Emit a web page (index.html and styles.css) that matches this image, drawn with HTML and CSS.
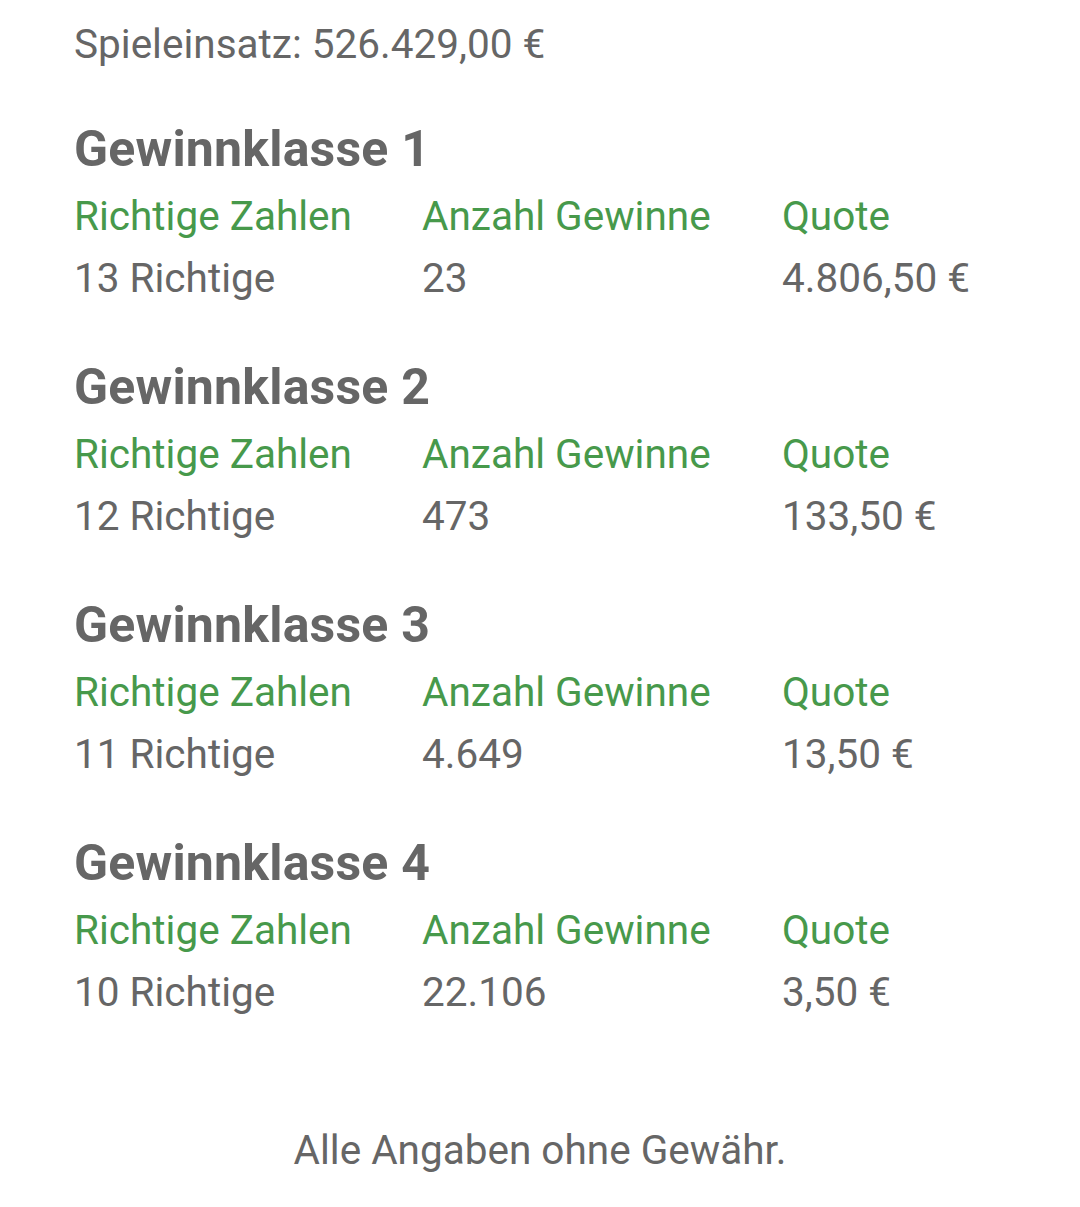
FILE: index.html
```html
<!DOCTYPE html>
<html lang="de">
<head>
<meta charset="utf-8">
<title>Quoten</title>
<link rel="stylesheet" href="styles.css">
</head>
<body>
<main class="page">
  <p class="stake">Spieleinsatz: 526.429,00 €</p>

  <section class="klasse">
    <h2 class="klasse-title">Gewinnklasse 1</h2>
    <div class="grid">
      <span class="head">Richtige Zahlen</span>
      <span class="head">Anzahl Gewinne</span>
      <span class="head">Quote</span>
      <span class="val">13 Richtige</span>
      <span class="val">23</span>
      <span class="val">4.806,50 €</span>
    </div>
  </section>

  <section class="klasse">
    <h2 class="klasse-title">Gewinnklasse 2</h2>
    <div class="grid">
      <span class="head">Richtige Zahlen</span>
      <span class="head">Anzahl Gewinne</span>
      <span class="head">Quote</span>
      <span class="val">12 Richtige</span>
      <span class="val">473</span>
      <span class="val">133,50 €</span>
    </div>
  </section>

  <section class="klasse">
    <h2 class="klasse-title">Gewinnklasse 3</h2>
    <div class="grid">
      <span class="head">Richtige Zahlen</span>
      <span class="head">Anzahl Gewinne</span>
      <span class="head">Quote</span>
      <span class="val">11 Richtige</span>
      <span class="val">4.649</span>
      <span class="val">13,50 €</span>
    </div>
  </section>

  <section class="klasse">
    <h2 class="klasse-title">Gewinnklasse 4</h2>
    <div class="grid">
      <span class="head">Richtige Zahlen</span>
      <span class="head">Anzahl Gewinne</span>
      <span class="head">Quote</span>
      <span class="val">10 Richtige</span>
      <span class="val">22.106</span>
      <span class="val">3,50 €</span>
    </div>
  </section>

  <p class="note">Alle Angaben ohne Gewähr.</p>
</main>
</body>
</html>
```

FILE: styles.css
```css
html, body {
  margin: 0;
  padding: 0;
  background: #ffffff;
}

body {
  font-family: Roboto, "Noto Sans", "Liberation Sans", sans-serif;
  color: #666666;
}

.page {
  padding: 14px 0 0 74px;
}

.stake {
  margin: 0 0 40px 0;
  font-size: 40.5px;
  line-height: 60px;
}

.klasse {
  margin: 0 0 44px 0;
}

.klasse-title {
  margin: 0;
  font-size: 50px;
  line-height: 70px;
  font-weight: 700;
  letter-spacing: 0.2px;
  color: #666666;
}

.grid {
  display: grid;
  grid-template-columns: 348px 360px auto;
  grid-template-rows: 64px 60px;
  font-size: 40.5px;
}

.head {
  color: #47994b;
  line-height: 64px;
}

.val {
  line-height: 60px;
}

.note {
  margin: 98px 0 0 -74px;
  text-align: center;
  font-size: 40.5px;
  line-height: 60px;
}
```
